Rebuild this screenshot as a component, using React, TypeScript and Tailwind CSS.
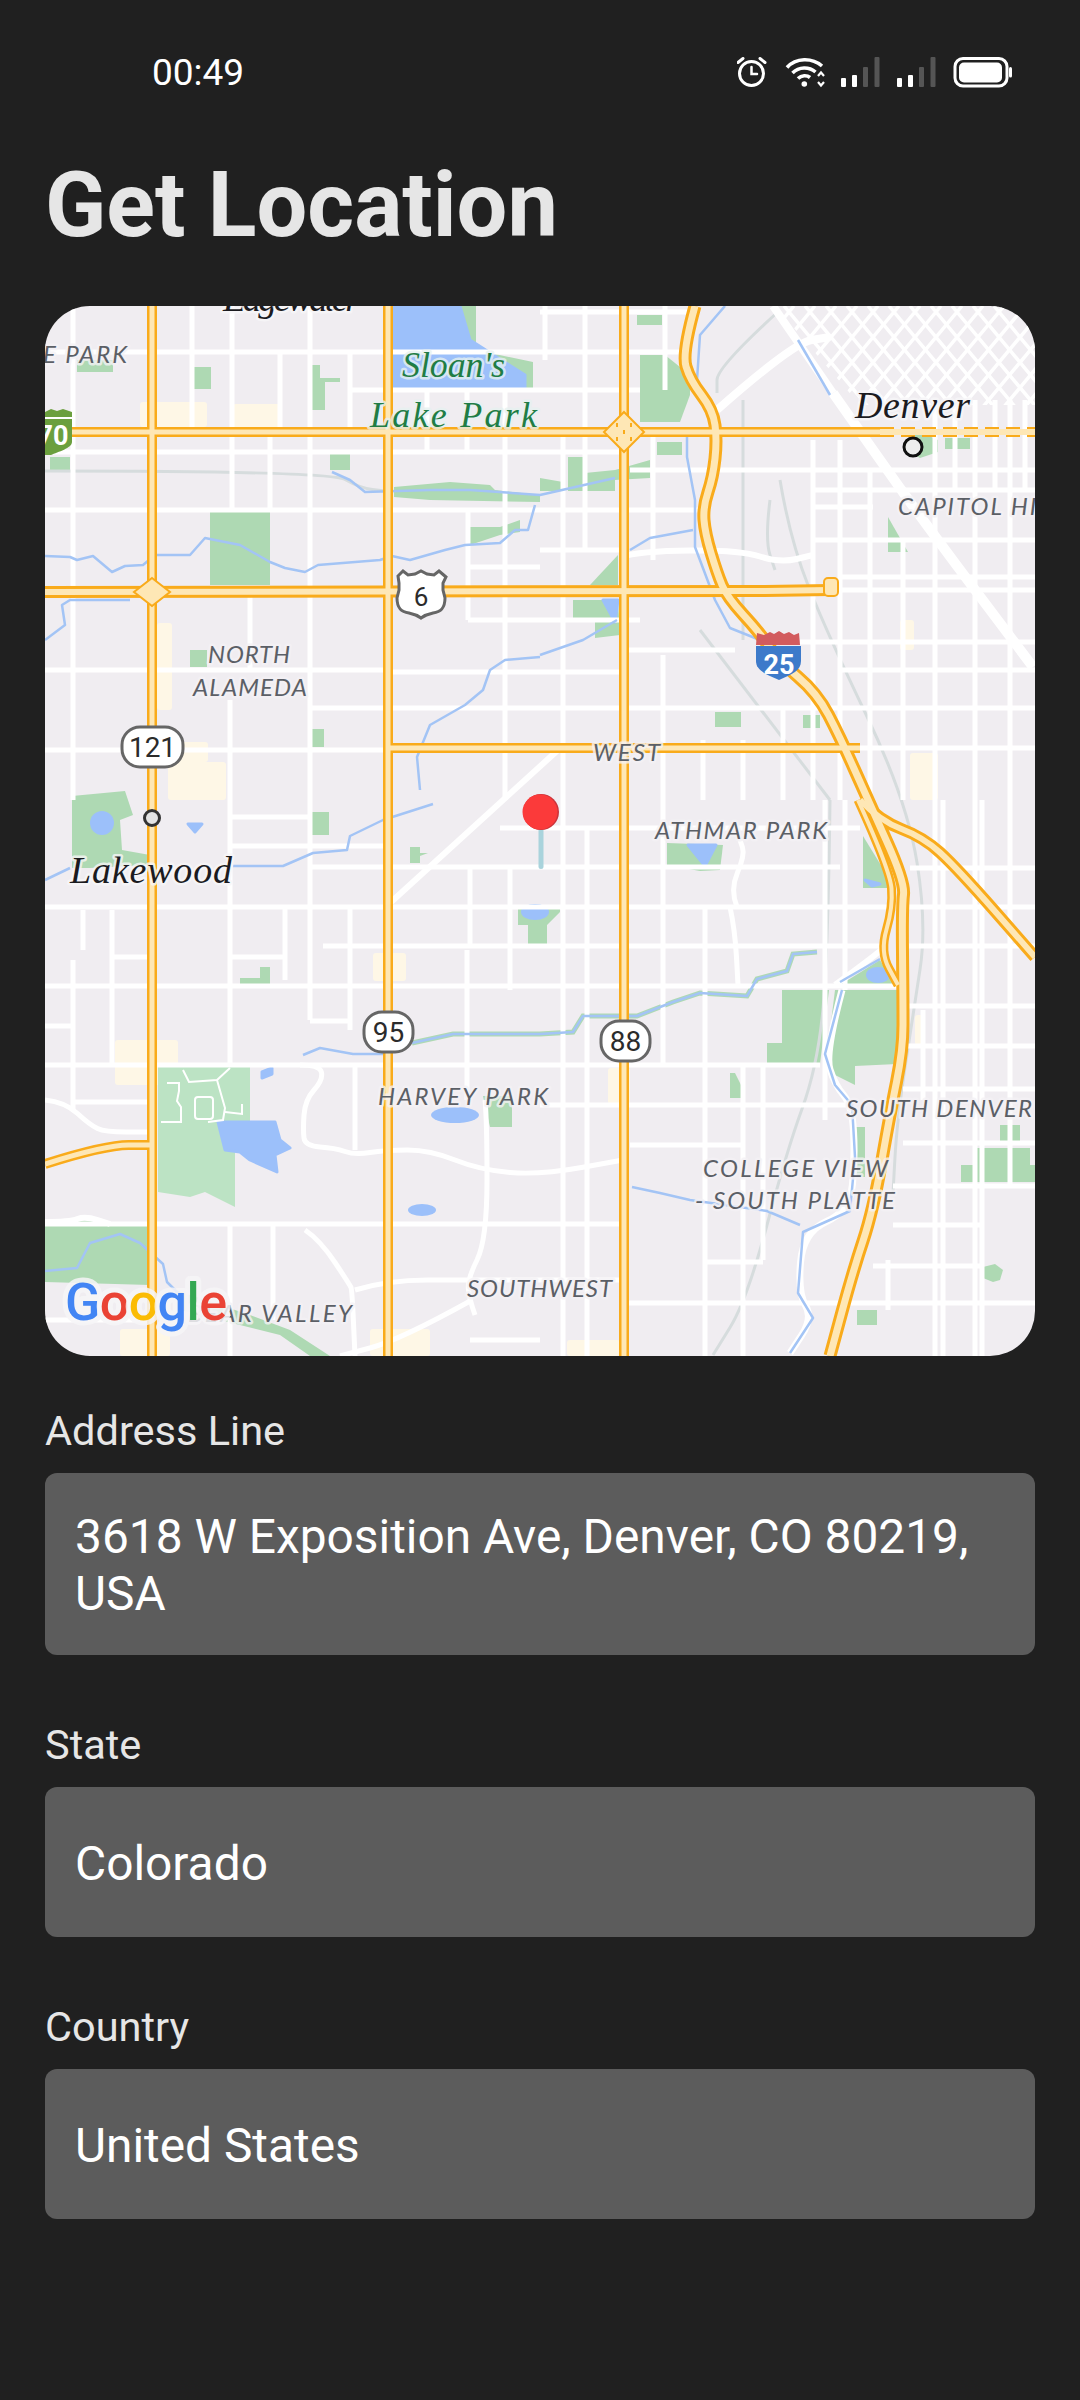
import React from 'react';

type Pt = [number, number];

// map drawing uses page coordinates: the card sits at 45,306 and is 990x1050
const poly = (p: number[]) => p.join(' ');
const line = (p: Pt[]) => 'M' + p.map(([x, y]) => `${x} ${y}`).join('L');

// rounds the corners of a polyline through the midpoints of its segments
const smooth = (p: Pt[]) => {
  if (p.length < 3) return line(p);
  let d = `M${p[0][0]} ${p[0][1]}`;
  for (let i = 1; i < p.length - 1; i++) {
    const mx = (p[i][0] + p[i + 1][0]) / 2;
    const my = (p[i][1] + p[i + 1][1]) / 2;
    d += `Q${p[i][0]} ${p[i][1]} ${mx} ${my}`;
  }
  const last = p[p.length - 1];
  return `${d}L${last[0]} ${last[1]}`;
};

const horizontals: [number, number, number][] = [
  [312, 540, 687], [352, 45, 680], [390, 350, 640], [452, 45, 625], [510, 45, 700], [550, 540, 625],
  [567, 468, 540], [620, 468, 640], [650, 625, 735], [670, 45, 388], [672, 388, 625], [708, 310, 625],
  [750, 45, 388], [470, 630, 1035], [490, 813, 1035], [507, 813, 873], [540, 813, 1035], [577, 840, 1035],
  [590, 840, 1035], [642, 800, 1035], [670, 840, 1035], [708, 625, 1035], [748, 860, 1035], [817, 232, 310],
  [828, 500, 860], [846, 232, 388], [867, 310, 840], [868, 910, 1035], [907, 45, 1035], [946, 323, 880],
  [946, 907, 1035], [957, 112, 147], [957, 232, 285], [986, 45, 898], [1006, 907, 1035], [1026, 45, 72],
  [1021, 310, 350], [1046, 907, 1035], [1065, 45, 820], [1102, 73, 147], [1105, 540, 846], [1089, 903, 1035],
  [1143, 903, 1035], [1145, 630, 743], [1186, 893, 1035], [1225, 893, 980], [1224, 45, 623], [1262, 707, 763],
  [1266, 873, 980], [1303, 628, 1035], [1340, 470, 540], [1320, 45, 150],
];

const verticals: [number, number, number][] = [
  [73, 306, 800], [192, 306, 430], [232, 306, 510], [270, 432, 510], [280, 352, 432], [310, 306, 1020],
  [350, 352, 432], [427, 390, 452], [467, 390, 452], [505, 390, 452], [468, 510, 620], [505, 452, 800],
  [250, 592, 670], [230, 700, 1065], [545, 306, 360], [585, 306, 550], [665, 306, 390], [563, 430, 1356],
  [653, 430, 560], [663, 655, 1065], [703, 740, 800], [743, 740, 800], [783, 708, 800], [813, 440, 800],
  [840, 440, 800], [870, 470, 800], [903, 540, 800], [935, 400, 1356], [975, 400, 1356], [1010, 400, 1186],
  [955, 400, 490], [995, 400, 490], [1025, 400, 490],
  [943, 800, 1356], [982, 800, 1356], [587, 830, 1356], [705, 907, 1356], [743, 1065, 1356], [763, 1065, 1260],
  [825, 800, 1120], [845, 800, 990], [923, 1010, 1100], [83, 910, 950], [112, 910, 1065], [73, 960, 1110],
  [285, 907, 980], [350, 907, 1030], [355, 1065, 1150], [467, 950, 1100], [510, 867, 990], [470, 867, 945],
  [888, 1260, 1310], [230, 1224, 1356], [273, 1224, 1320],
];

const whiteCurves: { d: Pt[]; w: number }[] = [
  { d: [[833, 393], [880, 460], [930, 530], [1033, 667]], w: 10 },
  { d: [[773, 306], [833, 393]], w: 8 },
  { d: [[717, 410], [793, 343], [830, 337]], w: 8 },
  { d: [[558, 750], [390, 903]], w: 6 },
  { d: [[620, 557], [640, 551], [740, 550], [780, 563], [813, 555]], w: 6 },
  { d: [[45, 1100], [65, 1102], [90, 1125], [105, 1132], [147, 1132]], w: 5 },
  { d: [[45, 1222], [70, 1222], [85, 1216], [110, 1224]], w: 6 },
  { d: [[300, 1065], [320, 1065], [323, 1080], [305, 1100], [303, 1130], [305, 1146], [335, 1148], [355, 1155], [385, 1150], [430, 1150], [480, 1170], [540, 1175], [623, 1160]], w: 5 },
  { d: [[485, 1100], [487, 1120], [487, 1240], [467, 1280], [470, 1300], [475, 1315]], w: 5 },
  { d: [[305, 1230], [320, 1240], [350, 1285], [352, 1290], [355, 1356]], w: 5 },
  { d: [[355, 1290], [388, 1280], [467, 1280], [540, 1280], [623, 1280]], w: 5 },
  { d: [[472, 1300], [400, 1340], [340, 1356]], w: 5 },
  { d: [[835, 985], [880, 952], [885, 945]], w: 6 },
  { d: [[842, 990], [825, 1054], [835, 1085], [852, 1105], [855, 1157], [850, 1211], [803, 1232], [798, 1293], [813, 1318], [790, 1353]], w: 7 },
  { d: [[737, 907], [730, 890], [745, 855], [740, 840]], w: 5 },
  { d: [[730, 907], [735, 930], [738, 985]], w: 5 },
];

const rails: Pt[][] = [
  [[45, 471], [330, 471], [360, 488], [385, 491]],
  [[780, 310], [717, 367], [717, 393]],
  [[743, 400], [743, 640]],
  [[780, 480], [790, 540], [827, 633], [907, 800], [927, 925], [913, 1014], [897, 1121], [893, 1193]],
  [[830, 800], [828, 960], [817, 1068], [787, 1150], [747, 1300], [713, 1355]],
  [[770, 500], [765, 540], [775, 570]],
  [[700, 630], [830, 800]],
];

const rivers: Pt[][] = [
  [[45, 556], [70, 557], [77, 560], [93, 556], [112, 572], [125, 566], [143, 565], [155, 555], [190, 555], [205, 538], [240, 545], [270, 562], [285, 568], [305, 572], [318, 565], [380, 560], [392, 556], [410, 560], [445, 550], [465, 545], [500, 543], [515, 530], [528, 530], [535, 505]],
  [[332, 472], [350, 480], [365, 492], [430, 490], [470, 490], [540, 495], [615, 478]],
  [[45, 640], [65, 625], [62, 605], [70, 600], [130, 600]],
  [[540, 657], [505, 660], [490, 670], [483, 690], [465, 705], [430, 725], [417, 757], [420, 790]],
  [[433, 804], [383, 820], [350, 836], [347, 850], [313, 853], [283, 866], [233, 866]],
  [[45, 880], [70, 868]],
  [[687, 433], [687, 457], [695, 500], [695, 547], [715, 600], [730, 628], [760, 640]],
  [[630, 550], [650, 538], [693, 530]],
  [[540, 655], [583, 640], [617, 620]],
  [[842, 990], [825, 1054], [835, 1085], [852, 1105], [855, 1157], [850, 1211], [803, 1232], [798, 1293], [813, 1318], [790, 1353]],
  [[840, 982], [880, 959]],
  [[632, 1187], [660, 1193], [690, 1200], [767, 1211], [800, 1225]],
  [[303, 1055], [320, 1048], [353, 1054], [383, 1054]],
  [[45, 1271], [77, 1268], [90, 1243], [120, 1234], [140, 1243], [163, 1264], [167, 1282], [180, 1295]],
  [[725, 306], [700, 335], [697, 380]],
  [[798, 340], [830, 395]],
  [[412, 1043], [453, 1034], [540, 1034], [573, 1032], [583, 1016], [637, 1016], [673, 1002], [700, 993], [747, 996], [757, 979], [787, 971], [793, 954], [817, 952]],
];

const creek: Pt[] = [[412, 1043], [453, 1034], [540, 1034], [573, 1032], [583, 1016], [637, 1016], [673, 1002], [700, 993], [747, 996], [757, 979], [787, 971], [793, 954], [817, 952]];

const parks: number[][] = [
  [77, 360, 113, 360, 113, 372, 77, 372],
  [194, 367, 211, 367, 211, 389, 194, 389],
  [312, 365, 320, 365, 320, 378, 340, 378, 340, 382, 325, 382, 325, 410, 312, 410],
  [330, 453, 350, 453, 350, 470, 330, 470],
  [210, 510, 270, 510, 270, 585, 210, 585],
  [394, 306, 476, 306, 476, 350, 533, 362, 533, 388, 394, 388],
  [394, 487, 450, 482, 490, 485, 495, 490, 540, 495, 540, 502, 430, 500, 394, 497],
  [470, 527, 500, 527, 520, 520, 520, 532, 500, 535, 470, 545],
  [190, 650, 207, 650, 207, 667, 190, 667],
  [312, 729, 324, 729, 324, 747, 312, 747],
  [50, 457, 70, 457, 70, 470, 50, 470],
  [72, 796, 125, 791, 133, 815, 120, 820, 122, 850, 150, 855, 150, 865, 90, 868, 72, 868],
  [640, 355, 665, 355, 690, 375, 690, 395, 680, 422, 640, 422],
  [637, 315, 662, 315, 662, 325, 637, 325],
  [568, 457, 585, 457, 585, 473, 615, 470, 650, 460, 650, 478, 615, 480, 615, 491, 568, 491],
  [540, 478, 563, 482, 563, 491, 540, 491],
  [657, 442, 682, 442, 682, 455, 657, 455],
  [573, 600, 618, 600, 620, 635, 595, 638, 595, 620, 573, 620],
  [590, 585, 618, 555, 618, 585],
  [888, 517, 908, 552, 888, 552],
  [920, 432, 938, 440, 938, 452, 920, 458, 905, 450, 905, 440],
  [945, 438, 953, 438, 953, 449, 945, 449],
  [955, 438, 970, 438, 970, 449, 955, 449],
  [715, 712, 741, 712, 741, 727, 715, 727],
  [803, 715, 820, 715, 820, 728, 803, 728],
  [312, 812, 329, 812, 329, 835, 312, 835],
  [410, 847, 420, 847, 420, 853, 428, 853, 420, 856, 420, 863, 410, 863],
  [518, 905, 560, 905, 560, 912, 547, 925, 547, 945, 528, 945, 528, 925, 518, 925],
  [240, 978, 260, 978, 260, 967, 270, 967, 270, 984, 240, 984],
  [483, 1096, 512, 1096, 512, 1127, 490, 1127],
  [667, 843, 723, 845, 720, 870, 700, 871, 667, 865],
  [782, 990, 829, 990, 820, 1064, 767, 1064, 767, 1043, 782, 1043],
  [835, 990, 897, 990, 897, 1064, 855, 1066, 855, 1085, 825, 1070],
  [840, 985, 880, 960, 895, 985],
  [863, 836, 890, 880, 890, 888, 863, 888],
  [730, 1073, 735, 1073, 741, 1085, 741, 1098, 730, 1098],
  [855, 1127, 865, 1127, 865, 1177, 855, 1177],
  [1000, 1125, 1020, 1125, 1020, 1143, 1000, 1143],
  [961, 1165, 977, 1165, 977, 1148, 1030, 1148, 1030, 1165, 1035, 1165, 1035, 1182, 961, 1182],
  [983, 1267, 995, 1264, 1003, 1270, 1000, 1280, 993, 1282, 983, 1278],
  [857, 1310, 877, 1310, 877, 1325, 857, 1325],
  [45, 1220, 80, 1220, 150, 1225, 150, 1285, 45, 1282],
  [175, 1290, 250, 1315, 290, 1330, 330, 1356, 310, 1356, 280, 1335, 180, 1310],
];

const water: number[][] = [
  [394, 306, 460, 306, 470, 340, 525, 375, 525, 388, 394, 388],
  [603, 600, 618, 600, 615, 622],
  [218, 1122, 275, 1122, 280, 1140, 290, 1148, 275, 1155, 277, 1172, 250, 1160, 240, 1152, 225, 1150],
  [688, 845, 716, 845, 705, 866],
  [865, 880, 880, 884, 872, 886],
  [262, 1072, 272, 1068, 272, 1074, 262, 1078],
  [188, 824, 202, 824, 195, 832],
];

const creams: [number, number, number, number][] = [
  [140, 402, 67, 25], [233, 404, 47, 24], [157, 623, 15, 87], [168, 742, 40, 20], [168, 762, 58, 38], [115, 1040, 63, 45],
  [373, 953, 33, 28], [608, 1068, 22, 36], [910, 753, 28, 47], [120, 1329, 50, 27], [370, 1329, 60, 27],
  [567, 1340, 53, 16], [900, 620, 14, 30], [915, 1015, 8, 30],
];

const freeways: { d: Pt[]; w: number; c: number }[] = [
  { d: [[152, 306], [152, 1356]], w: 10, c: 5 },
  { d: [[388, 306], [388, 1356]], w: 10, c: 5 },
  { d: [[624, 306], [624, 1356]], w: 10, c: 5 },
  { d: [[45, 432], [880, 432]], w: 10, c: 5 },
  { d: [[388, 748], [860, 748]], w: 10, c: 5 },
  { d: [[45, 1164], [105, 1145], [152, 1145]], w: 10, c: 5 },
  { d: [[45, 592], [700, 592], [830, 590]], w: 12, c: 6 },
  { d: [[860, 800], [880, 821], [923, 837], [957, 868], [1035, 957]], w: 12, c: 6 },
  { d: [[858, 800], [890, 870], [893, 907], [880, 952], [898, 985]], w: 9, c: 4 },
  { d: [[695, 306], [682, 353], [690, 380], [713, 410], [717, 440], [713, 477], [703, 507], [705, 533], [717, 573], [727, 597], [760, 633], [778, 660], [817, 693], [840, 737], [868, 800], [905, 882], [902, 907], [903, 1000], [903, 1050], [890, 1114], [873, 1211], [853, 1271], [830, 1356]], w: 13, c: 7 },
];

const labels: { t: string; x: number; y: number; w: number; s: number; kind: 'area' | 'city' | 'park' }[] = [
  { t: 'Edgewater', x: 223, y: 311, w: 137, s: 38, kind: 'city' },
  { t: "Sloan's", x: 402, y: 377, w: 103, s: 36, kind: 'park' },
  { t: 'Lake Park', x: 370, y: 427, w: 167, s: 36, kind: 'park' },
  { t: 'E PARK', x: 43, y: 363, w: 84, s: 24, kind: 'area' },
  { t: 'NORTH', x: 208, y: 663, w: 82, s: 24, kind: 'area' },
  { t: 'ALAMEDA', x: 193, y: 696, w: 114, s: 24, kind: 'area' },
  { t: 'Lakewood', x: 70, y: 883, w: 162, s: 38, kind: 'city' },
  { t: 'Denver', x: 855, y: 418, w: 115, s: 38, kind: 'city' },
  { t: 'CAPITOL HILL', x: 898, y: 515, w: 165, s: 24, kind: 'area' },
  { t: 'WEST', x: 593, y: 761, w: 67, s: 24, kind: 'area' },
  { t: 'ATHMAR PARK', x: 655, y: 839, w: 172, s: 24, kind: 'area' },
  { t: 'HARVEY PARK', x: 378, y: 1105, w: 170, s: 24, kind: 'area' },
  { t: 'SOUTH DENVER', x: 846, y: 1117, w: 186, s: 24, kind: 'area' },
  { t: 'COLLEGE VIEW', x: 703, y: 1177, w: 185, s: 24, kind: 'area' },
  { t: '- SOUTH PLATTE', x: 695, y: 1209, w: 200, s: 24, kind: 'area' },
  { t: 'SOUTHWEST', x: 467, y: 1297, w: 145, s: 24, kind: 'area' },
  { t: 'BEAR VALLEY', x: 188, y: 1322, w: 164, s: 24, kind: 'area' },
];

const labelStyle = {
  area: { fill: '#5b5f66', font: 'Lato, sans-serif', italic: 'italic', halo: '#f4f2f5' },
  city: { fill: '#1b1b1f', font: '"Liberation Serif", serif', italic: 'italic', halo: '#f7f6f8' },
  park: { fill: '#1f7d45', font: '"Liberation Serif", serif', italic: 'italic', halo: '#e6f1f0' },
};

const RouteBadge: React.FC<{ x: number; y: number; w: number; h: number; text: string }> = ({ x, y, w, h, text }) => (
  <g>
    <rect x={x} y={y} width={w} height={h} rx={h * 0.45} fill="#fff" stroke="#666" strokeWidth="3" />
    <text x={x + w / 2} y={y + h / 2 + 10} textAnchor="middle" fontFamily="Roboto, sans-serif" fontSize="28" fill="#2b2b2b">
      {text}
    </text>
  </g>
);

const MapView: React.FC = () => (
  <svg viewBox="45 306 990 1050" className="block w-full h-full">
    <defs>
      <clipPath id="downtown">
        <polygon points="775,306 1035,306 1035,405 860,405" />
      </clipPath>
    </defs>
    <rect x="45" y="306" width="990" height="1050" fill="#f0edf1" />

    {creams.map(([x, y, w, h], i) => (
      <rect key={i} x={x} y={y} width={w} height={h} rx="3" fill="#fef7e6" />
    ))}
    {parks.map((p, i) => (
      <polygon key={i} points={poly(p)} fill="#aed9b3" />
    ))}
    <polygon points={poly([158, 1065, 250, 1065, 250, 1125, 235, 1125, 235, 1207, 205, 1192, 190, 1197, 158, 1192])} fill="#bce3c4" />
    <path d={line(creek)} fill="none" stroke="#aed9b3" strokeWidth="5" />
    {water.map((p, i) => (
      <polygon key={i} points={poly(p)} fill="#9cc0fa" stroke="#9cc0fa" strokeWidth="3" strokeLinejoin="round" />
    ))}
    <ellipse cx="102" cy="823" rx="12" ry="12" fill="#9cc0fa" />
    <ellipse cx="535" cy="912" rx="14" ry="8" fill="#9cc0fa" />
    <ellipse cx="455" cy="1115" rx="24" ry="8" fill="#9cc0fa" />
    <ellipse cx="422" cy="1210" rx="14" ry="6" fill="#9cc0fa" />
    <ellipse cx="878" cy="975" rx="12" ry="8" fill="#9cc0fa" />

    {rails.map((r, i) => (
      <path key={i} d={smooth(r)} fill="none" stroke="#d6dcdd" strokeWidth="3" />
    ))}

    {horizontals.map(([y, a, b], i) => (
      <path key={i} d={`M${a} ${y}H${b}`} stroke="#fff" strokeWidth="5" />
    ))}
    {verticals.map(([x, a, b], i) => (
      <path key={i} d={`M${x} ${a}V${b}`} stroke="#fff" strokeWidth="5" />
    ))}
    {whiteCurves.map((c, i) => (
      <path key={i} d={smooth(c.d)} fill="none" stroke="#fff" strokeWidth={c.w} strokeLinejoin="round" />
    ))}

    {/* downtown street grid */}
    <g stroke="#fff" strokeWidth="3.5" clipPath="url(#downtown)">
      {Array.from({ length: 20 }, (_, i) => (
        <path key={i} d={`M${700 + i * 21} 306L${700 + i * 21 + 100} 426`} />
      ))}
      {Array.from({ length: 20 }, (_, i) => (
        <path key={i} d={`M${1130 - i * 21} 306L${1130 - i * 21 - 100} 426`} />
      ))}
    </g>

    {/* trails in the park south of Lakewood */}
    <g fill="none" stroke="#fff" strokeWidth="2">
      <path d="M183 1070l6 12 28-2 13-12" />
      <path d="M217 1080l8 28-2 12-15 2" />
      <path d="M167 1083h12v8l-2 10 4 6v15h-20" />
      <rect x="195" y="1097" width="18" height="22" rx="3" />
      <path d="M225 1112l17 2v-10" />
    </g>

    {rivers.map((r, i) => (
      <path key={i} d={line(r)} fill="none" stroke="#a3c4f5" strokeWidth="2.5" strokeLinejoin="round" />
    ))}

    {freeways.map((f, i) => (
      <path key={i} d={smooth(f.d)} fill="none" stroke="#f9ab1b" strokeWidth={f.w} strokeLinejoin="round" />
    ))}
    {freeways.map((f, i) => (
      <path key={i} d={smooth(f.d)} fill="none" stroke="#fee7b5" strokeWidth={f.c} strokeLinejoin="round" />
    ))}
    {/* east end of the 6th ave line and the dashed stretch of the top road */}
    <rect x="824" y="578" width="14" height="18" rx="4" fill="#fee7b5" stroke="#f9ab1b" strokeWidth="2" />
    <path d="M880 432H1035" stroke="#f9ab1b" strokeWidth="10" strokeDasharray="14 7" />
    <path d="M880 432H1035" stroke="#fee7b5" strokeWidth="6" />
    {/* interchanges */}
    <polygon points={poly([624, 412, 644, 432, 624, 452, 604, 432])} fill="#fee7b5" stroke="#f9ab1b" strokeWidth="2" />
    <path d="M616 425h2M630 425h2M616 439h2M630 439h2M623 432h2" stroke="#f9ab1b" strokeWidth="4" />
    <polygon points={poly([152, 578, 170, 592, 152, 606, 134, 592])} fill="#fee7b5" stroke="#f9ab1b" strokeWidth="2" />

    {labels.map(l => {
      const st = labelStyle[l.kind];
      return (
        <text
          key={l.t}
          x={l.x}
          y={l.y}
          textLength={l.w}
          lengthAdjust="spacing"
          fontSize={l.s}
          fontFamily={st.font}
          fontStyle={st.italic}
          fill={st.fill}
          stroke={st.halo}
          strokeWidth="5"
          strokeOpacity="0.8"
          strokeLinejoin="round"
          paintOrder="stroke"
        >
          {l.t}
        </text>
      );
    })}

    {/* city dots */}
    <circle cx="913" cy="447" r="9" fill="#eee" stroke="#111" strokeWidth="3" />
    <circle cx="152" cy="818" r="7.5" fill="#e4e4e4" stroke="#333" strokeWidth="3" />

    {/* shields */}
    <path
      d="M398 576l5-5 5 4 7-1 6-3 6 3 7 1 5-4 7 6-3 6v7l2 8c0 10-4 14-12 15-5 1-8 2-12 5-4-3-7-4-12-5-8-1-12-5-12-15l2-8v-7z"
      fill="#fff"
      stroke="#666"
      strokeWidth="3"
    />
    <text x="421" y="606" textAnchor="middle" fontFamily="Roboto, sans-serif" fontSize="26" fill="#2b2b2b">6</text>
    <RouteBadge x={122} y={727} w={61} h={40} text="121" />
    <RouteBadge x={364} y={1012} w={49} h={40} text="95" />
    <RouteBadge x={601} y={1021} w={49} h={40} text="88" />

    <path d="M757 633l7 2 6-3 4 2 5-3 5 3 5-2 5 3 5-2 1 12h-44z" fill="#d25b5e" />
    <path d="M756 646h45v15c0 9-8 13-22 19-14-6-23-10-23-19z" fill="#3d7aca" />
    <text x="779" y="674" textAnchor="middle" fontFamily="Roboto, sans-serif" fontWeight="700" fontSize="27" fill="#fff">25</text>

    <path d="M45 412l6-3 6 2 6-2 9 3v30c0 6-14 10-21 13l-6 0z" fill="#6b9f3e" />
    <path d="M45 418h27" stroke="#fff" strokeWidth="2" />
    <text x="53" y="445" textAnchor="middle" fontFamily="Roboto, sans-serif" fontWeight="700" fontSize="27" fill="#fff">70</text>

    {/* pin */}
    <rect x="538.5" y="828" width="5" height="41" rx="2.5" fill="#a9d3dc" />
    <circle cx="541" cy="812" r="18" fill="#c9333a" />
    <circle cx="540" cy="812" r="17.5" fill="#fb3a3a" />

    {/* Google logo */}
    <text x="65" y="1320" textLength="162" lengthAdjust="spacing" fontFamily="Roboto, sans-serif" fontWeight="500" fontSize="52" stroke="#f6f5f7" strokeOpacity="0.85" strokeWidth="10" strokeLinejoin="round" paintOrder="stroke">
      <tspan fill="#4285f4">G</tspan>
      <tspan fill="#ea4335">o</tspan>
      <tspan fill="#fbbc05">o</tspan>
      <tspan fill="#4285f4">g</tspan>
      <tspan fill="#34a853">l</tspan>
      <tspan fill="#ea4335">e</tspan>
    </text>
  </svg>
);

const StatusIcons: React.FC = () => (
  <svg viewBox="0 0 275 32" width="275" height="32" className="block">
    {/* alarm */}
    <g fill="none" stroke="#fff" strokeWidth="3" strokeLinecap="round">
      <circle cx="14.5" cy="16.5" r="12" />
      <path d="M14.5 10v7h5.5" strokeWidth="2.5" />
      <path d="M1 5.5L6 1.5M23 1.5L28 5.5" />
    </g>
    {/* wifi */}
    <g fill="none" stroke="#fff" strokeWidth="3.6">
      <path d="M50 10.5C59 0.5 75 0.5 85 9" />
      <path d="M55.5 16C62 9.5 72 9.5 78.5 15" />
      <path d="M61 21.5C64.5 18 70 18 73 20.5" />
    </g>
    <circle cx="67.3" cy="27" r="2.8" fill="#fff" />
    <path d="M81 19l3-3.5 3 3.5M81 25l3 3.5 3-3.5" fill="none" stroke="#fff" strokeWidth="2.2" />
    {/* signal */}
    {[104, 160].map(x => (
      <g key={x}>
        <rect x={x} y="21" width="5" height="9" rx="1" fill="#fff" />
        <rect x={x + 11} y="18" width="5" height="12" rx="1" fill="#fff" />
        <rect x={x + 22} y="10" width="5" height="20" rx="1" fill="#555" />
        <rect x={x + 33.5} y="0" width="5" height="30" rx="1" fill="#555" />
      </g>
    ))}
    {/* battery */}
    <rect x="218" y="1.5" width="52" height="27.5" rx="8" fill="none" stroke="#fff" strokeWidth="3" />
    <rect x="222" y="5.5" width="43" height="20" rx="5" fill="#fff" />
    <rect x="272" y="10" width="3" height="10.5" rx="1.5" fill="#fff" />
  </svg>
);

const Field: React.FC<{ label: string; value: string; first?: boolean; tall?: boolean }> = ({ label, value, first, tall }) => (
  <div className={first ? 'mt-[51px]' : 'mt-[66px]'}>
    <div className="text-[41.5px] leading-[48px] text-[#e6e6e6]">{label}</div>
    <div
      className={`mt-[18px] flex items-center rounded-[12px] bg-[#5c5c5c] px-[30px] pt-[4px] text-[47.85px] leading-[57px] text-white ${tall ? 'h-[182px]' : 'h-[150px]'}`}
    >
      {value}
    </div>
  </div>
);

const App: React.FC = () => {
  return (
    <div className="min-h-screen bg-[#202020] font-[Roboto,sans-serif]">
      {/* Status bar */}
      <div className="flex h-[153px] items-start justify-between pl-[152px] pr-[68px] pt-[55px]">
        <span className="text-[37px] leading-[36px] text-white">00:49</span>
        <div className="pt-[2px]">
          <StatusIcons />
        </div>
      </div>

      <div className="px-[45px] pb-[182px]">
        <h1 className="text-[90px] font-bold leading-[105px] text-[#e6e6e6]">Get Location</h1>

        <div className="mt-[48px] h-[1050px] overflow-hidden rounded-[45px]">
          <MapView />
        </div>

        <Field first tall label="Address Line" value="3618 W Exposition Ave, Denver, CO 80219, USA" />
        <Field label="State" value="Colorado" />
        <Field label="Country" value="United States" />
      </div>
    </div>
  );
};

export default App;
